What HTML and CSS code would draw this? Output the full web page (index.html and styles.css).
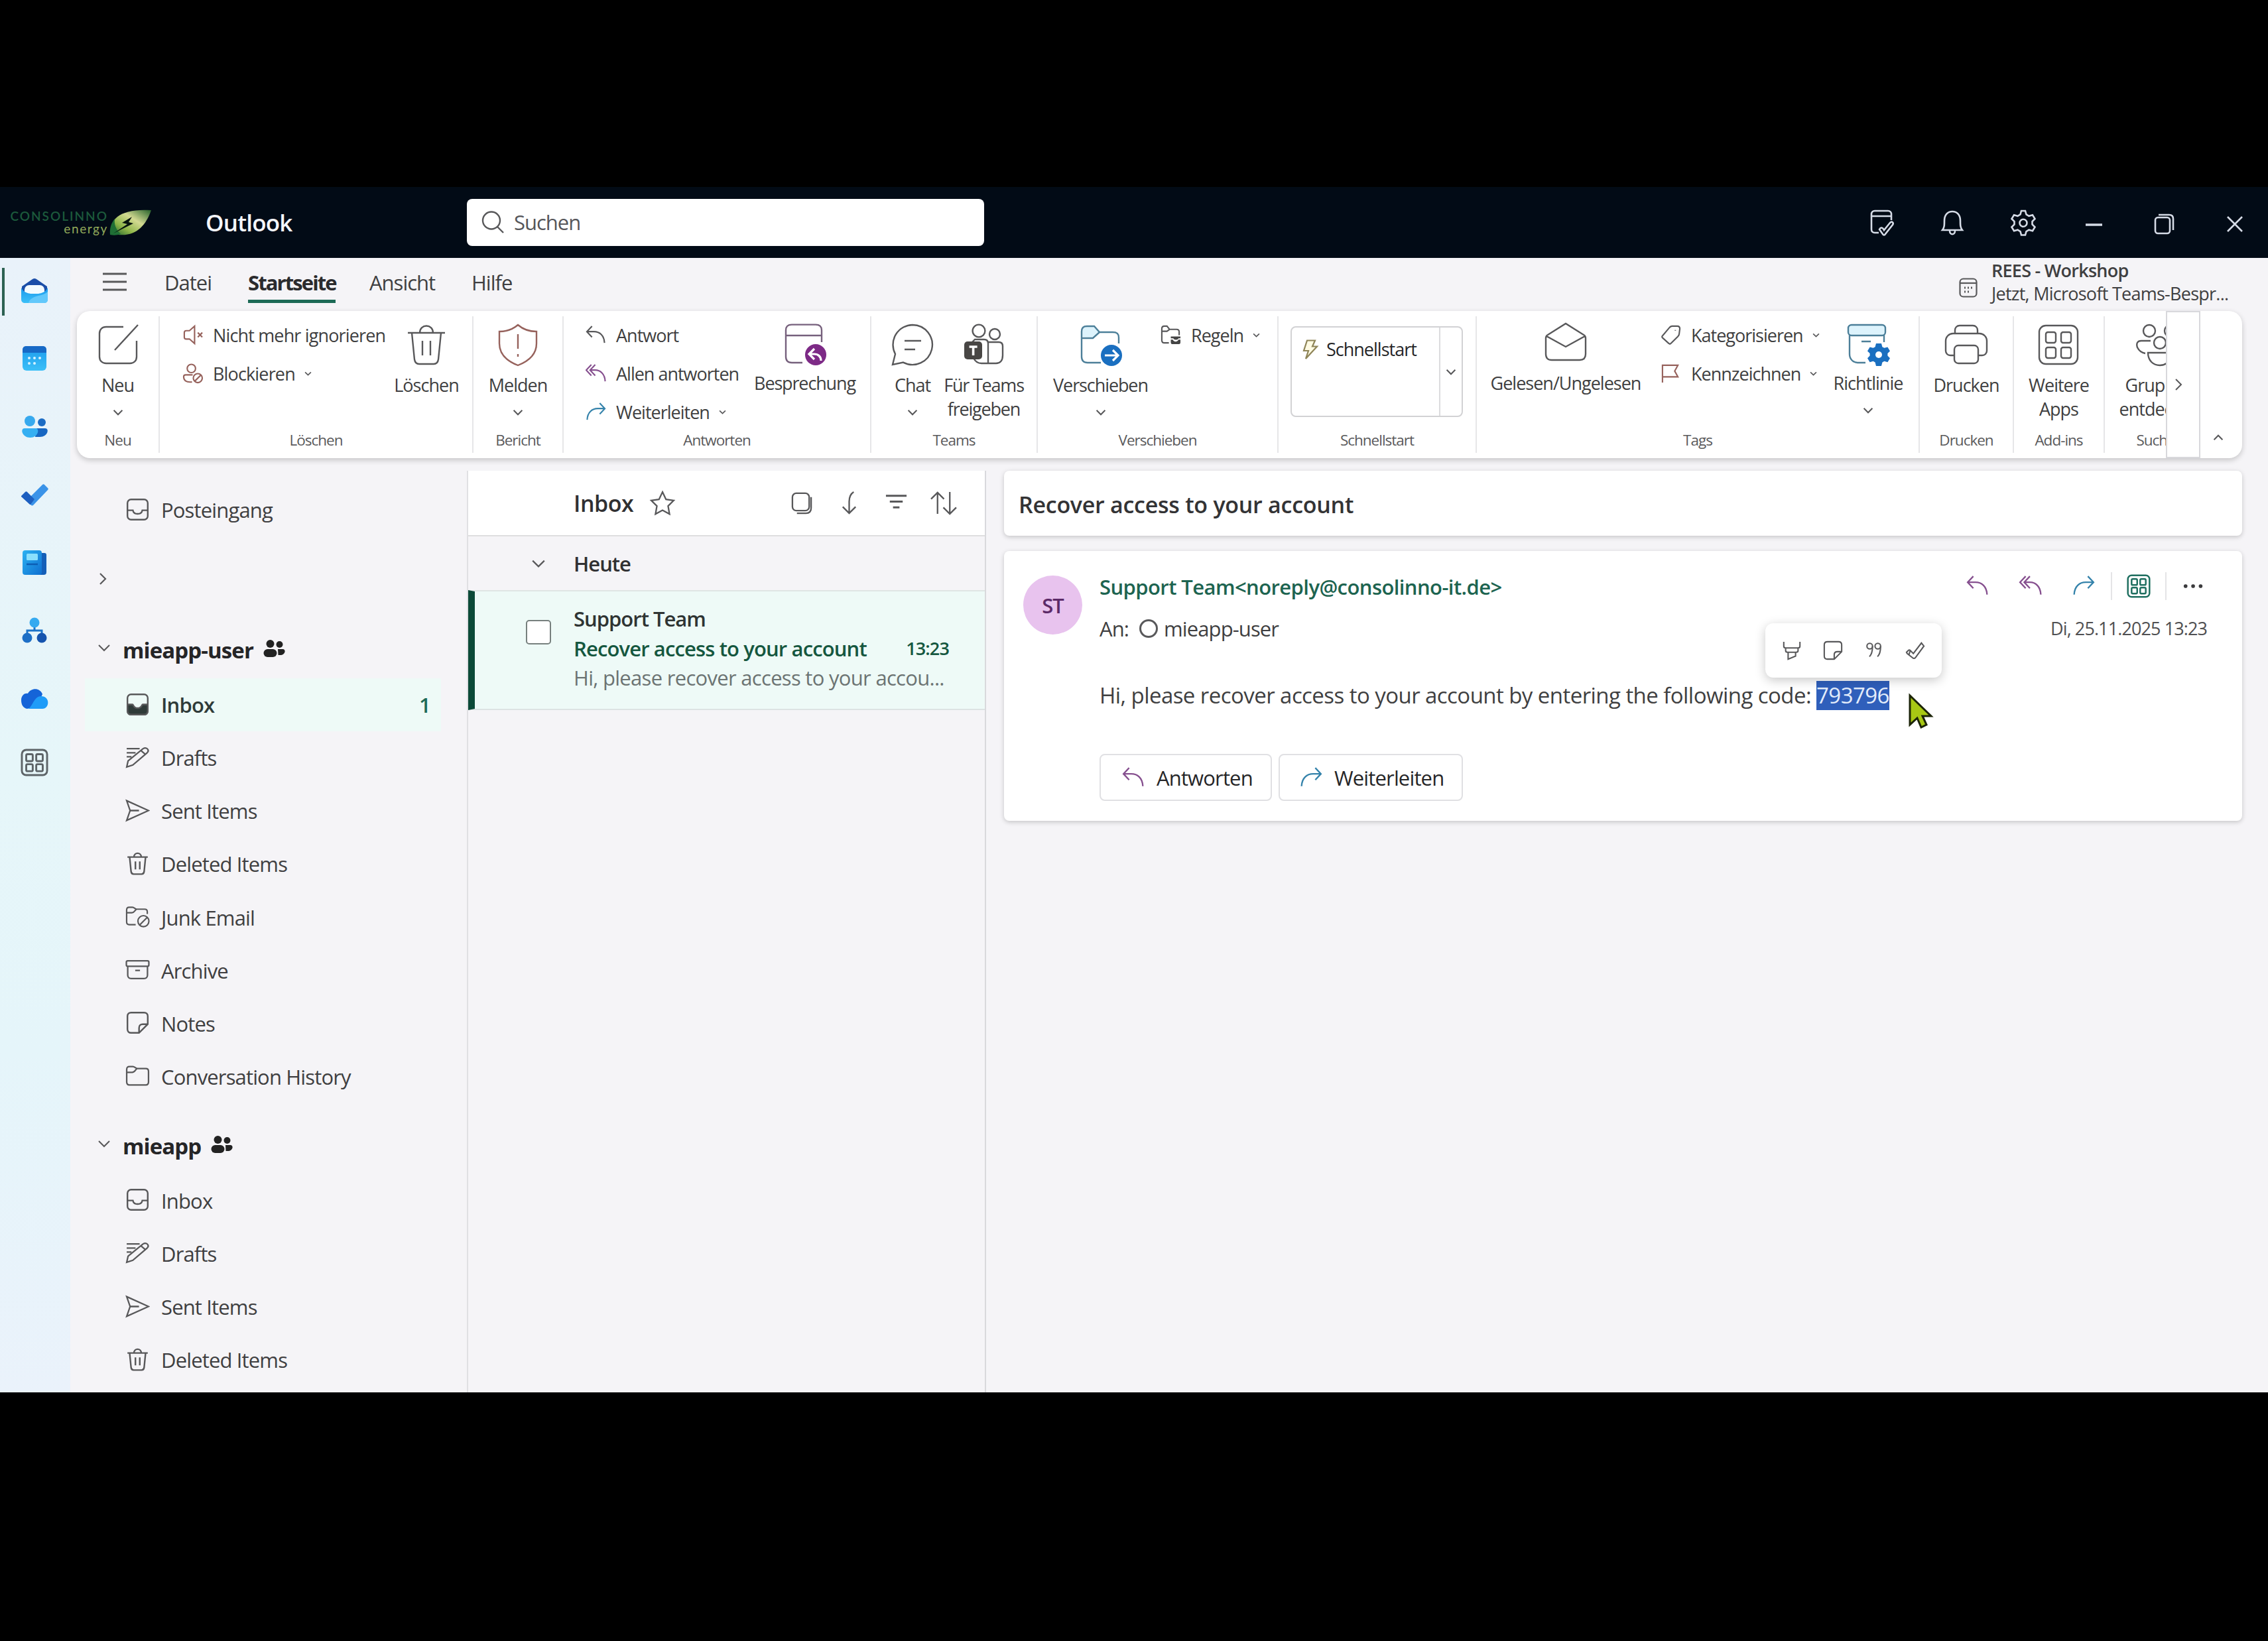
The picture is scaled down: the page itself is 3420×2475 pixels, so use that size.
FILE: index.html
```html
<!DOCTYPE html>
<html lang="de">
<head>
  <meta charset="UTF-8">
  <meta name="viewport" content="width=device-width, initial-scale=1.0">
  <title>Outlook</title>
  <link rel="stylesheet" href="styles.css">
</head>
<body>

<!-- Icons -->
<svg class="defs" width="0" height="0">
  <defs>
    <linearGradient id="gBlue" x1="0" y1="0" x2="1" y2="1"><stop offset="0" stop-color="#2cb2f2"/><stop offset="1" stop-color="#0f6fd0"/></linearGradient>
    <linearGradient id="gSky" x1="0" y1="0" x2="0" y2="1"><stop offset="0" stop-color="#1c9aec"/><stop offset="1" stop-color="#3cc0f8"/></linearGradient>
    <linearGradient id="gLeaf" x1="0" y1="1" x2="1" y2="0"><stop offset="0" stop-color="#155c2c"/><stop offset=".3" stop-color="#8db548"/><stop offset=".6" stop-color="#d3da92"/><stop offset="1" stop-color="#24602a"/></linearGradient>
  </defs>
  <symbol id="down" viewBox="0 0 20 20"><path d="M2 6l8 8 8-8"/></symbol>
  <symbol id="right" viewBox="0 0 20 20"><path d="M6 2l8 8-8 8"/></symbol>
  <symbol id="up" viewBox="0 0 20 20"><path d="M2 14l8-8 8 8"/></symbol>
  <symbol id="reply" viewBox="0 0 32 32"><path d="M10 2L2 10.500l8 8.500M2 10.500h11c9 0 16 6 16.500 17.500"/></symbol>
  <symbol id="replyall" viewBox="0 0 32 32"><path d="M9 2L1 10.500l8 8.500M15 2L7 10.500l8 8.500M7 10.500h8c8 0 15 6 15.500 17.500"/></symbol>
  <symbol id="forward" viewBox="0 0 32 32"><path d="M22 2l8 8.500L22 19M30 10.500H19C10 10.500 3 16.500 2.500 28"/></symbol>
  <symbol id="trash" viewBox="0 0 32 32"><path d="M2 7h28M11 7c0-7 10-7 10 0M5 7l2 20c.3 2 1.500 3.500 3.500 3.500h11c2 0 3.200-1.500 3.500-3.500l2-20M13 13v11M19 13v11"/></symbol>
  <symbol id="inbox" viewBox="0 0 32 32"><rect x="2" y="2" width="28" height="28" rx="5"/><path d="M2 17h7.500c.5 3 3 5 6.500 5s6-2 6.500-5H30"/></symbol>
  <symbol id="inboxfill" viewBox="0 0 32 32"><rect x="2" y="2" width="28" height="28" rx="5"/><path fill="#2f3b39" d="M2 16h7c1.500 0 1 5 7 5s5.500-5 7-5h7v9c0 3-2 5-5 5H7c-3 0-5-2-5-5z"/></symbol>
  <symbol id="drafts" viewBox="0 0 36 32"><path d="M2 3h19M2 9h13M2 15h7M2 30l2-9L26 3c5-3 10 2 6 6L11 27zM23 6l6 5"/></symbol>
  <symbol id="sent" viewBox="0 0 36 32"><path d="M2 1.500L34 16 2 30.500 7 16zM7 16h13"/></symbol>
  <symbol id="folder" viewBox="0 0 36 32"><path d="M2 25V7c0-3 1-4.500 4-4.500h5c3 0 4 3 7 3h12c3 0 4 1.500 4 4V25c0 3-1.500 4.500-4 4.500H6c-2.500 0-4-1.500-4-4.500zM2 11h8c4 0 4-3 7-5.500"/></symbol>
  <symbol id="junk" viewBox="0 0 38 34"><path d="M16 29.500H6c-2.500 0-4-1.500-4-4.500V7c0-3 1-4.500 4-4.500h5c3 0 4 3 7 3h12c3 0 4 1.500 4 4V13M2 11h8c4 0 4-3 7-5.500"/><circle cx="28" cy="24" r="8.500"/><path d="M22 30l12-12"/></symbol>
  <symbol id="archive" viewBox="0 0 36 32"><rect x="1.500" y="3" width="33" height="8" rx="2"/><path d="M3.500 11v13c0 3 2 5 5 5h19c3 0 5-2 5-5V11M14.500 17h7"/></symbol>
  <symbol id="note" viewBox="0 0 32 32"><path d="M2 7c0-3 2-5 5-5h18c3 0 5 2 5 5v11L18 30H7c-3 0-5-2-5-5zM30 18h-7c-3 0-5 2-5 5v7"/></symbol>
  <symbol id="people" viewBox="0 0 34 28"><g stroke="none" fill="#222"><circle cx="11" cy="7" r="6"/><circle cx="25" cy="8" r="5"/><rect x="1" y="15" width="20" height="12" rx="6"/><path d="M22.500 15H30c5 0 4 9-4 9h-3z"/></g></symbol>
  <symbol id="apps" viewBox="0 0 32 32"><rect x="1.500" y="1.500" width="29" height="29" rx="5"/><rect x="6.500" y="6.500" width="7.500" height="8" rx="1.500"/><rect x="18" y="6.500" width="7.500" height="8" rx="1.500"/><rect x="6.500" y="18" width="7.500" height="8" rx="1.500"/><rect x="18" y="18" width="7.500" height="8" rx="1.500"/></symbol>
</svg>

<div class="window">

  <!-- Titelleiste -->
  <header class="titlebar">
    <div class="logo">
      <div class="logo-text"><span class="logo-name">CONSOLINNO</span><span class="logo-sub">energy</span></div>
      <svg class="leaf" viewBox="0 0 64 40"><path fill="url(#gLeaf)" d="M3 36C-1 14 18-2 63 1 54 27 36 45 3 36z"/><path fill="#1f6f35" d="M1 38C0 28 3 20 8 14c-1 8 1 15 9 23-6 2-11 2-16 1z"/><path fill="#06140e" d="M34 11L19 20l8 2L6 36l30-15-7-2z"/></svg>
    </div>
    <div class="app-name">Outlook</div>
    <div class="search">
      <svg class="search-icon" viewBox="0 0 34 34"><circle cx="15" cy="14.500" r="13"/><path d="M24 24l9 9"/></svg>
      <span>Suchen</span>
    </div>
    <div class="window-buttons">
      <svg viewBox="0 0 40 40"><path d="M15 35H9c-3 0-5-2-5-5V7c0-3 2-5 5-5h20c3 0 5 2 5 5v9M4 10h30M16 30c2-4 5-3 7 1l9-11c3-3 6 0 4 3L25 37c-1 2-3 2-4 0z"/></svg>
      <svg viewBox="0 0 40 40"><path d="M5 31c3-4 3-7 3-14C8 8 13 3 20 3s12 5 12 14c0 7 0 10 3 14zM16 32c0 7 8 7 8 0"/></svg>
      <svg viewBox="0 0 40 40"><path d="M17 2h6l1.500 5.500 4 2.300 5.500-1.500 3.500 5.700-4 4v4.500l4 4-3.500 5.700-5.500-1.500-4 2.300L23 38.500h-6l-1.500-5.500-4-2.300L6 32.200 2.500 26.500l4-4V18l-4-4L6 8.300l5.500 1.500 4-2.300z"/><circle cx="20" cy="20.300" r="5.500"/></svg>
      <svg viewBox="0 0 40 40"><path d="M8 23h25" stroke-width="3.500"/></svg>
      <svg viewBox="0 0 40 40"><rect x="6" y="12" width="22" height="24" rx="4"/><path d="M11 8h16c4 0 6 2 6 6v17"/></svg>
      <svg viewBox="0 0 40 40"><path d="M9 11l22 22M31 11L9 33"/></svg>
    </div>
  </header>

  <div class="main">

    <!-- App-Leiste -->
    <nav class="rail">
      <a class="active"><svg viewBox="0 0 42 42"><path fill="#1b4ea8" d="M2 14L18 3c2-1.500 4-1.500 6 0l16 11v8H2z"/><rect fill="#f3fbff" x="6" y="12" width="30" height="18" rx="7"/><path fill="url(#gSky)" d="M1 16c4 7 9 8 14 9h12c5-1 10-2 14-9v17c0 4-2 6-6 6H7c-4 0-6-2-6-6z"/><path fill="#62c8fb" d="M12 39c2-7 8-9 15-11 6-1 11-3 14-6v11c0 4-2 6-6 6z"/></svg></a>
      <a><svg viewBox="0 0 42 42"><rect x="3" y="2" width="36" height="37" rx="6" fill="url(#gSky)"/><path fill="#1769c6" d="M3 12V8c0-4 2-6 6-6h24c4 0 6 2 6 6v4z"/><g fill="#d7f3ff"><circle cx="13" cy="20" r="2"/><circle cx="21" cy="20" r="2"/><circle cx="29" cy="20" r="2"/><circle cx="13" cy="28" r="2"/><circle cx="21" cy="28" r="2"/></g></svg></a>
      <a><svg viewBox="0 0 42 42"><circle cx="14" cy="12" r="8" fill="#37a9ee"/><circle cx="32" cy="14" r="6" fill="#1c6cc4"/><path fill="#1767c2" d="M24 23h13c7 0 4 13-8 13h-7z"/><path fill="#35aff2" d="M6 23h17c6 0 4 14-8.500 14S-1 23 6 23z"/></svg></a>
      <a><svg viewBox="0 0 42 42"><path fill="#3a93e8" d="M11 28L33 6c1-1 2-1 3 0l5 5c1 1 1 2 0 3L20 36c-2 2-3 2-5 0z"/><path fill="#1c5fc0" d="M1 23l6-6c1-1 2-1 3 0l11 11-6 8c-1 0-1 0-2-1L1 24z"/></svg></a>
      <a><svg viewBox="0 0 42 42"><path fill="#145fb8" d="M28 6h8c2 0 3 1 3 3v26c0 3-2 4-4 4h-9z"/><rect x="3" y="2" width="29" height="37" rx="4" fill="url(#gBlue)"/><rect x="9" y="7" width="17" height="10" rx="1.500" fill="#8be0fd"/><path d="M9 23h17" stroke="#0c5eb4" stroke-width="2.500"/></svg></a>
      <a><svg viewBox="0 0 42 42"><path d="M21 12v9M10 30v-9h22v9" fill="none" stroke="#1c74c9" stroke-width="3"/><circle cx="21" cy="9" r="7.500" fill="#35aaf0"/><circle cx="10" cy="32" r="7.500" fill="#1d6fc6"/><circle cx="32" cy="32" r="7.500" fill="#1554ae"/></svg></a>
      <a><svg viewBox="0 0 42 42"><path fill="#1564d8" d="M1 23C1 15 7 12 11 13c5-9 18-9 22 1l-8 18-15 4C4 35 1 30 1 23z"/><path fill="#1f9cf8" d="M10 36c8 0 9-19 21-19 14 0 13 19 2 19z"/></svg></a>
      <a class="more"><svg class="line" viewBox="0 0 32 32"><use href="#apps"/></svg></a>
    </nav>

    <div class="content">

      <!-- Menü -->
      <div class="tabs">
        <svg class="burger" viewBox="0 0 36 28"><path d="M0 2h36M0 14h36M0 26h36"/></svg>
        <a class="tab tab-file">Datei</a>
        <a class="tab tab-home">Startseite</a>
        <a class="tab tab-view">Ansicht</a>
        <a class="tab">Hilfe</a>
        <div class="meeting">
          <svg viewBox="0 0 28 30"><rect x="1.500" y="1.500" width="25" height="27" rx="5"/><path d="M1.500 8h25"/><path d="M8 15h2M13 15h2M18 15h2M8 21h2M13 21h2" stroke-width="3"/></svg>
          <div><b>REES - Workshop</b><span>Jetzt, Microsoft Teams-Bespr...</span></div>
        </div>
      </div>

      <!-- Menüband -->
      <div class="ribbon">
        <div class="group g-new">
          <div class="group-body center">
            <a class="big"><svg viewBox="0 0 32 32"><path d="M20 2.500H7c-3 0-5 2-5 5V25c0 3 2 5 5 5h18c3 0 5-2 5-5V13M13.500 20L31 1"/></svg><span>Neu</span><svg class="chev"><use href="#down"/></svg></a>
          </div>
          <div class="group-label">Neu</div>
        </div>

        <div class="group g-delete">
          <div class="group-body">
            <div class="small-col">
              <a class="small"><svg class="red" viewBox="0 0 32 32"><path d="M19 2v27l-8-7H6c-2 0-3-1-3-3v-7c0-2 1-3 3-3h5zM24 12l7 7M31 12l-7 7"/></svg>Nicht mehr ignorieren</a>
              <a class="small"><svg class="red" viewBox="0 0 32 32"><circle cx="14" cy="8" r="6.500"/><path d="M15 29C5 30 2 26 2 21c0-2 1-3 3-3h11"/><circle cx="24" cy="23" r="7"/><path d="M19 28l10-10"/></svg>Blockieren<svg class="chev"><use href="#down"/></svg></a>
            </div>
            <a class="big"><svg viewBox="0 0 32 32"><use href="#trash"/></svg><span>Löschen</span></a>
          </div>
          <div class="group-label">Löschen</div>
        </div>

        <div class="group g-report">
          <div class="group-body center">
            <a class="big"><svg class="red" viewBox="0 0 32 32"><path d="M16 1c4 3.500 8 5 14 5v9c0 8-5 13-14 16.500C7 28 2 23 2 15V6c6 0 10-1.500 14-5zM16 8v11M16 23v2"/></svg><span>Melden</span><svg class="chev"><use href="#down"/></svg></a>
          </div>
          <div class="group-label">Bericht</div>
        </div>

        <div class="group g-reply">
          <div class="group-body">
            <div class="small-col">
              <a class="small"><svg viewBox="0 0 32 32"><use href="#reply"/></svg>Antwort</a>
              <a class="small"><svg class="purple" viewBox="0 0 32 32"><use href="#replyall"/></svg>Allen antworten</a>
              <a class="small"><svg class="blue" viewBox="0 0 32 32"><use href="#forward"/></svg>Weiterleiten<svg class="chev"><use href="#down"/></svg></a>
            </div>
            <a class="big tight"><svg viewBox="0 0 32 32"><path d="M14 29.500H6c-3 0-4.500-1.500-4.500-4.500V5C1.500 2 3 .800 6 .800h18c3 0 4.500 1.200 4.500 4.200v9M1.500 9h27" stroke="#76607c"/><circle cx="24" cy="23.500" r="8" fill="#7d2a86" stroke="none"/><path d="M23 19l-4 4 4 4M19 23h4c3 0 5 2 5 5" stroke="#fff" stroke-width="1.600"/></svg><span>Besprechung</span></a>
          </div>
          <div class="group-label">Antworten</div>
        </div>

        <div class="group g-teams">
          <div class="group-body">
            <a class="big"><svg viewBox="0 0 32 32"><path d="M16 1a15 15 0 1 1-7 28.300L1 31l2-8A15 15 0 0 1 16 1zM10 13h12.500M10 19.500h8"/></svg><span>Chat</span><svg class="chev"><use href="#down"/></svg></a>
            <a class="big wide"><svg viewBox="0 0 32 32"><circle cx="12" cy="5.500" r="4.700"/><circle cx="24" cy="8" r="4"/><path d="M7 14l2-2h7c2 0 3 1 3 3v15h-5c-3 0-5-2-6-4M19 14h8c2 0 3 1 3 3v7c0 4-2 6-5 6h-6"/><rect x="1" y="13.500" width="13.500" height="13.500" rx="2.500" fill="#484644" stroke="none"/><path d="M4.800 17.500h6M7.800 17.500v6.500" stroke="#fff" stroke-width="1.800"/></svg><span>Für Teams<br>freigeben</span></a>
          </div>
          <div class="group-label">Teams</div>
        </div>

        <div class="group g-move">
          <div class="group-body">
            <a class="big"><svg viewBox="0 0 32 32"><path d="M1.500 10V6c0-3 1.500-4 4-4H11l4 4-4 4.500z" fill="#ddf3fc" stroke="none"/><path d="M16 29.500H6c-3 0-4.500-1.500-4.500-4.500V6c0-3 1.500-4 4-4H11l4 4.500h10c3 0 4.500 1 4.500 4V15M1.500 11H10l5-4.500" stroke="#4c7f99"/><circle cx="24" cy="24" r="8" fill="#1a6fc0" stroke="none"/><path d="M19 24h10M25 20l4 4-4 4" stroke="#fff" stroke-width="1.600"/></svg><span>Verschieben</span><svg class="chev"><use href="#down"/></svg></a>
            <div class="small-col">
              <a class="small"><svg viewBox="0 0 32 32"><path d="M13 28H6c-2 0-4-1-4-4V6c0-3 1-4 4-4h4l4 5h11c3 0 4 1 4 4v5M2 10h8l4-3"/><path d="M16 18h15v3h-3c-1 3-7 3-8 0h-4zM16 23h3c2 4 7 4 9 0h3v4c0 2-1 3-3 3h-9c-2 0-3-1-3-3z" fill="#444" stroke="none"/></svg>Regeln<svg class="chev"><use href="#down"/></svg></a>
            </div>
          </div>
          <div class="group-label">Verschieben</div>
        </div>

        <div class="group g-quick">
          <div class="group-body">
            <div class="quick-box">
              <div class="quick-item"><svg viewBox="0 0 24 30"><path d="M7 1.500h12l-4 9h7L5 29l4-12H2z"/></svg>Schnellstart</div>
              <div class="quick-more"><svg class="chev"><use href="#down"/></svg></div>
            </div>
          </div>
          <div class="group-label">Schnellstart</div>
        </div>

        <div class="group g-tags">
          <div class="group-body">
            <a class="big tight"><svg viewBox="0 0 32 32"><path d="M1 11c0-1 .5-2 1.500-2.500L16 0l13.500 8.500c1 .5 1.500 1.500 1.500 2.500v12c0 3-1.500 4.500-4.500 4.500h-21C2.500 27.500 1 26 1 23zM1.500 9.500L16 17.500l14.500-8"/></svg><span>Gelesen/Ungelesen</span></a>
            <div class="small-col">
              <a class="small"><svg viewBox="0 0 32 32"><path d="M18 2h8c3 0 4 1 4 4l-1 8c0 2-1 3-2 4L16 29c-1 1-2 1-3 0L3 20c-1-1-1-2 0-3L14 4c1-1 2-2 4-2zM23 8v1"/></svg>Kategorisieren<svg class="chev"><use href="#down"/></svg></a>
              <a class="small"><svg class="red" viewBox="0 0 32 32"><path d="M3 30V3h24l-5 9 5 9H3"/></svg>Kennzeichnen<svg class="chev"><use href="#down"/></svg></a>
            </div>
            <a class="big tight"><svg viewBox="0 0 32 32"><rect x="1" y="1" width="28" height="8" rx="2.500" fill="#ddf3fc" stroke="#4c7f99"/><path d="M14 29.500H8C5 29.500 2 27 2 23V9M28 9v5M11 13.500h7" stroke="#4c7f99"/><path fill="#1a6fc0" stroke="none" d="M22 15h4l.7 2.600 1.500.8 2.500-.7 1.800 3-1.800 1.800v1.800l1.800 1.800-1.800 3-2.500-.7-1.500.8L26 32h-4l-.7-2.800-1.500-.8-2.500.7-1.800-3 1.800-1.800v-1.800l-1.800-1.800 1.800-3 2.500.7 1.500-.8z"/><circle cx="24" cy="23.500" r="2.500" fill="#fff" stroke="none"/></svg><span>Richtlinie</span><svg class="chev"><use href="#down"/></svg></a>
          </div>
          <div class="group-label">Tags</div>
        </div>

        <div class="group g-print">
          <div class="group-body center">
            <a class="big"><svg viewBox="0 0 32 32"><path d="M7.500 7.500V5c0-2 1.500-3.500 3.500-3.500h10c2 0 3.500 1.500 3.500 3.500v2.500M7 24H4c-2 0-3.500-1.500-3.500-3.500V13c0-3 2.500-5.500 5.500-5.500h20c3 0 5.500 2.500 5.500 5.500v7.500c0 2-1.500 3.500-3.500 3.500h-3"/><rect x="7" y="16.500" width="18" height="13.500" rx="3"/></svg><span>Drucken</span></a>
          </div>
          <div class="group-label">Drucken</div>
        </div>

        <div class="group g-addins">
          <div class="group-body center">
            <a class="big"><svg viewBox="0 0 32 32"><use href="#apps"/></svg><span>Weitere<br>Apps</span></a>
          </div>
          <div class="group-label">Add-ins</div>
        </div>

        <div class="group g-find">
          <div class="find-inner">
            <div class="group-body center">
              <a class="big"><svg viewBox="0 0 32 32"><circle cx="8" cy="5.500" r="4.500"/><circle cx="24" cy="5.500" r="4.500"/><circle cx="16" cy="14.500" r="4.500"/><path d="M9 13H2c-3 0-4 2-3 5 1 2 3 4 6 4.500M23 13h7c3 0 4 2 3 5-1 2-3 4-6 4.500M8 22h16c0 6-3 9.500-8 9.500S7 28 7 22z"/></svg><span>Gruppen<br>entdecken</span></a>
            </div>
            <div class="group-label">Suchen</div>
          </div>
        </div>
        <div class="ribbon-next"><svg class="chev"><use href="#right"/></svg></div>
        <div class="ribbon-collapse"><svg class="chev"><use href="#up"/></svg></div>
      </div>

      <div class="panes">

        <!-- Ordner -->
        <aside class="folders">
          <a class="folder"><svg><use href="#inbox"/></svg>Posteingang</a>
          <div class="collapsed"><svg class="chev"><use href="#right"/></svg></div>
          <div class="account"><svg class="chev"><use href="#down"/></svg>mieapp-user<svg class="people"><use href="#people"/></svg></div>
          <a class="folder selected"><svg><use href="#inboxfill"/></svg>Inbox<span class="count">1</span></a>
          <a class="folder"><svg><use href="#drafts"/></svg>Drafts</a>
          <a class="folder"><svg><use href="#sent"/></svg>Sent Items</a>
          <a class="folder"><svg><use href="#trash"/></svg>Deleted Items</a>
          <a class="folder"><svg><use href="#junk"/></svg>Junk Email</a>
          <a class="folder"><svg><use href="#archive"/></svg>Archive</a>
          <a class="folder"><svg><use href="#note"/></svg>Notes</a>
          <a class="folder"><svg><use href="#folder"/></svg>Conversation History</a>
          <div class="account second"><svg class="chev"><use href="#down"/></svg>mieapp<svg class="people"><use href="#people"/></svg></div>
          <a class="folder"><svg><use href="#inbox"/></svg>Inbox</a>
          <a class="folder"><svg><use href="#drafts"/></svg>Drafts</a>
          <a class="folder"><svg><use href="#sent"/></svg>Sent Items</a>
          <a class="folder"><svg><use href="#trash"/></svg>Deleted Items</a>
        </aside>

        <!-- Nachrichtenliste -->
        <section class="list">
          <div class="list-head">
            <b>Inbox</b>
            <svg class="star" viewBox="0 0 36 36"><path d="M18 2l5 10.500 11 1.500-8 8 2 11.500-10-5.500-10 5.500L10 22l-8-8 11-1.500z"/></svg>
            <div class="list-tools">
              <svg viewBox="0 0 36 36"><rect x="3" y="3" width="26" height="27" rx="6"/><path d="M32 9v17c0 5-3 8-8 8H10"/></svg>
              <svg viewBox="0 0 36 36"><path d="M25 1c-5 3-7 8-7 15v18M8 24l10 10 10-10"/></svg>
              <svg viewBox="0 0 36 36"><path d="M2 7h32M8 16h20M13 25h10" stroke-width="3.200"/></svg>
              <svg viewBox="0 0 36 36"><path d="M9 35V2M-1 12L9 2l10 10M28 1v34M18 25l10 10 10-10"/></svg>
            </div>
          </div>
          <div class="list-group"><svg class="chev"><use href="#down"/></svg>Heute</div>
          <div class="mail">
            <div class="checkbox"></div>
            <div class="mail-text">
              <div class="mail-from">Support Team</div>
              <div class="mail-subject"><span>Recover access to your account</span><time>13:23</time></div>
              <div class="mail-preview">Hi, please recover access to your accou...</div>
            </div>
          </div>
        </section>

        <!-- Lesebereich -->
        <section class="reader">
          <div class="subject-card">Recover access to your account</div>
          <article class="message">
            <div class="avatar">ST</div>
            <div class="message-main">
              <div class="message-top">
                <div class="sender">Support Team&lt;noreply@consolinno-it.de&gt;</div>
                <div class="actions">
                  <svg class="purple"><use href="#reply"/></svg>
                  <svg class="purple"><use href="#replyall"/></svg>
                  <svg class="blue"><use href="#forward"/></svg>
                  <span class="apps-btn"><svg><use href="#apps"/></svg></span>
                  <svg class="dots" viewBox="0 0 36 36"><circle cx="5" cy="18" r="3"/><circle cx="17" cy="18" r="3"/><circle cx="29" cy="18" r="3"/></svg>
                </div>
              </div>
              <div class="message-to">
                <span>An:</span><i class="presence"></i><span>mieapp-user</span>
                <time>Di, 25.11.2025 13:23</time>
              </div>
              <p class="body-text">Hi, please recover access to your account by entering the following code: <mark>793796</mark></p>
              <div class="buttons">
                <button class="btn-reply"><svg class="purple"><use href="#reply"/></svg>Antworten</button>
                <button class="btn-forward"><svg class="blue"><use href="#forward"/></svg>Weiterleiten</button>
              </div>
            </div>
            <!-- schwebende Leiste über der Markierung -->
            <div class="float-bar">
              <svg viewBox="0 0 32 32"><path d="M3 2v7c0 2 1 3 3 3h20c2 0 3-1 3-3V2M6 12v4c0 2 1 3 3 3h14c2 0 3-1 3-3v-4M10 19v11l12-5v-6"/></svg>
              <svg viewBox="0 0 32 32"><use href="#note"/></svg>
              <svg viewBox="0 0 32 32"><circle cx="9" cy="9" r="4.500"/><path d="M13.500 9c0 7-1 13-5 17"/><circle cx="22" cy="9" r="4.500"/><path d="M26.500 9c0 7-1 13-5 17"/></svg>
              <svg viewBox="0 0 32 32"><path d="M2 19l3-3c1-1 2-1 3 0l5 5L26 4l4 5-14 19c-1 1-3 1-4 0l-9-7z M8 16l-2 7"/></svg>
            </div>
            <svg class="cursor" viewBox="0 0 36 52"><path d="M2 2v44l11-10 6 14 8-4-6-13h13z" fill="#a8c814" stroke="#1c2408" stroke-width="3"/></svg>
          </article>
        </section>

      </div>
    </div>
  </div>
</div>

</body>
</html>
```
FILE: styles.css
```css
* {
    box-sizing: border-box;
}

body {
    margin: 0;
    width: 3420px;
    height: 2475px;
    padding-top: 282px;
    overflow: hidden;
    background: #000;
    color: #3f3f41;
    font-family: "Open Sans", "Noto Sans", sans-serif;
    font-size: 31px;
    letter-spacing: -1px;
}

.defs {
    position: absolute;
}

svg {
    display: block;
    flex: none;
    fill: none;
    stroke: #58585a;
    stroke-width: 2.2;
    overflow: visible;
}

svg.red { stroke: #96625c; }
svg.purple { stroke: #86508f; }
svg.blue { stroke: #3583ab; }

.chev {
    width: 16px;
    height: 16px;
    stroke-width: 2.6;
}

.window {
    height: 1818px;
    background: #f5f4f7;
}

/* Titelleiste */
.titlebar {
    display: flex;
    align-items: center;
    height: 107px;
    background: #020b16;
}

.logo {
    display: flex;
    align-items: center;
    width: 310px;
    padding-left: 15px;
    gap: 2px;
}

.logo-text {
    display: flex;
    flex-direction: column;
    align-items: flex-end;
    width: 148px;
    margin-bottom: 2px;
    font-family: Lato, sans-serif;
    font-size: 19px;
    line-height: 19px;
}

.logo-name {
    color: #1c5a3c;
    font-weight: 600;
    letter-spacing: 2px;
}

.logo-sub {
    color: #91a95a;
    letter-spacing: 1.600px;
}

.leaf {
    width: 64px;
    height: 40px;
    stroke: none;
}

.app-name {
    width: 394px;
    color: #f4f6fa;
    font-size: 35px;
    font-weight: 600;
    letter-spacing: -0.800px;
}

.search {
    display: flex;
    align-items: center;
    width: 780px;
    height: 71px;
    margin-bottom: 1px;
    padding-left: 22px;
    gap: 15px;
    border-radius: 8px;
    background: #fff;
    color: #56565a;
}

.search-icon {
    width: 34px;
    height: 34px;
    stroke-width: 2.4;
}

.window-buttons {
    display: flex;
    margin-left: auto;
    padding-right: 30px;
    gap: 66.400px;
}

.window-buttons svg {
    width: 40px;
    height: 40px;
    stroke: #d5dbe6;
    stroke-width: 2.6;
}

.main {
    display: flex;
    height: 1711px;
}

/* App-Leiste */
.rail {
    width: 106px;
    padding-top: 15px;
    background: linear-gradient(180deg, #e9f2fa 0%, #e6f6f9 45%, #e5f5fa 70%, #eaf2fb 100%);
}

.rail a {
    display: flex;
    align-items: center;
    justify-content: center;
    height: 72px;
    margin-bottom: 30.500px;
    padding: 0 2px 3px 0;
}

.rail a.active {
    box-shadow: inset 3px 0 #e9f2fa, inset 7px 0 #2c6152;
}

.rail a.more {
    margin-top: -37px;
    padding-top: 62px;
}

.rail svg {
    width: 42px;
    height: 42px;
    stroke: none;
}

.rail svg.line {
    stroke: #5d6468;
    stroke-width: 2.2;
}

.content {
    display: flex;
    flex-direction: column;
    width: 3314px;
}

/* Menü */
.tabs {
    display: flex;
    height: 80px;
    padding-left: 49px;
}

.burger {
    width: 36px;
    height: 28px;
    margin: 22px 57px 0 0;
    stroke-width: 2.8;
}

.tab {
    height: 68px;
    padding-top: 15px;
    margin-right: 53px;
    line-height: 44px;
}

.tab-file { width: 73px; }

.tab-home {
    width: 132px;
    border-bottom: 5px solid #1d6a56;
    color: #2b2b2d;
    font-weight: 700;
    margin-right: 51px;
    letter-spacing: -1.900px;
}

.tab-view { width: 101px; }

.meeting {
    display: flex;
    align-items: flex-end;
    width: 413px;
    height: 68px;
    margin-left: auto;
    margin-right: 53px;
    gap: 21px;
    font-size: 27px;
    line-height: 35px;
    letter-spacing: -0.740px;
    white-space: nowrap;
}

.meeting svg {
    width: 28px;
    height: 30px;
    margin-bottom: 8px;
}

.meeting div {
    height: 67px;
}

.meeting b,
.meeting span {
    display: block;
    font-weight: 600;
}

.meeting span {
    font-weight: 400;
}

/* Menüband */
.ribbon {
    display: flex;
    width: 3265px;
    height: 222px;
    margin-left: 10px;
    border-radius: 20px;
    background: #fff;
    box-shadow: 0 3px 8px rgba(0, 0, 0, 0.2);
    font-size: 27px;
}

.group {
    display: flex;
    flex-direction: column;
    flex: none;
    height: 206px;
    margin: 8px 0;
    border-right: 2px solid #e6e6e8;
}

.g-new { width: 125px; }
.g-delete { width: 473px; }
.g-report { width: 136px; }
.g-reply { width: 464px; }
.g-teams { width: 251px; }
.g-move { width: 363px; }
.g-quick { width: 299px; }
.g-tags { width: 668px; }
.g-print { width: 142px; }
.g-addins { width: 137px; }

.g-find {
    width: 92px;
    overflow: hidden;
    border: 0;
}

.find-inner {
    width: 166px;
}

.group-body {
    display: flex;
    height: 172px;
}

.group-body.center {
    justify-content: center;
}

.group-label {
    color: #5a5a5c;
    font-size: 22.500px;
    line-height: 30px;
    text-align: center;
}

.big {
    display: flex;
    flex-direction: column;
    align-items: center;
    padding-top: 11px;
    line-height: 36px;
    text-align: center;
    white-space: nowrap;
}

.big > svg:first-child {
    width: 64px;
    height: 64px;
    margin-bottom: 11px;
    stroke-width: 1.2;
}

.big.tight > svg:first-child {
    margin-bottom: 8px;
}

.big .chev {
    margin-top: 15px;
}

.small {
    display: flex;
    align-items: center;
    height: 58px;
    padding-bottom: 1px;
    white-space: nowrap;
}

.small > svg:first-child {
    width: 31px;
    height: 31px;
    margin-right: 15px;
}

.small .chev {
    width: 11px;
    height: 11px;
    margin-left: 14px;
    stroke-width: 3;
}

.g-delete .group-body { padding-left: 34px; }
.g-delete .small-col { width: 319px; letter-spacing: -0.850px; }
.g-delete .big { width: 98px; }

.g-reply .group-body { padding-left: 33px; }
.g-reply .small-col { width: 246px; }
.g-reply .big { width: 169px; letter-spacing: -1.150px; }

.g-teams .group-body { padding-left: 22px; }
.g-teams .big { width: 80px; }
.g-teams .big.wide { width: 135px; letter-spacing: -1.200px; }

.g-move .group-body { padding-left: 19px; }
.g-move .big { width: 151px; letter-spacing: -1.100px; }
.g-move .small-col { margin-left: 15px; }

.g-quick .group-body { padding-left: 18px; }

.g-tags .group-body { padding-left: 14px; }
.g-tags .big { width: 240px; }
.g-tags .small-col { width: 253px; margin-left: 23px; }
.g-tags .small-col + .big { width: 120px; }

.quick-box {
    display: flex;
    width: 260px;
    height: 137px;
    margin-top: 15px;
    border: 2px solid #d2d2d4;
    border-radius: 8px;
}

.quick-item {
    display: flex;
    width: 222px;
    height: 65px;
    padding-left: 16px;
    align-items: center;
    gap: 12px;
    color: #262628;
    white-space: nowrap;
}

.quick-item svg {
    width: 24px;
    height: 30px;
    fill: #fffbe3;
    stroke: #8f8558;
}

.quick-more {
    display: flex;
    flex: 1;
    align-items: center;
    justify-content: center;
    border-left: 2px solid #dcdcde;
}

.ribbon-next {
    display: flex;
    align-items: center;
    width: 52px;
    padding-left: 7px;
    border: 2px solid #d8d8dc;
}

.ribbon-next .chev {
    width: 20px;
    height: 20px;
    stroke-width: 2;
}

.ribbon-collapse {
    display: flex;
    align-items: flex-end;
    padding: 0 0 23px 19px;
}

.panes {
    display: flex;
    height: 1409px;
    padding-top: 19px;
}

/* Ordner */
.folders {
    width: 598px;
    padding: 19px 39px 0 22px;
    letter-spacing: -0.850px;
}

.folder {
    display: flex;
    align-items: center;
    height: 80.100px;
    padding-left: 61px;
}

.folder svg {
    width: 37px;
    height: 35px;
    margin: 0 17px 2px 0;
}

.folder.selected {
    background: #eefaf7;
    color: #2f3b39;
    font-weight: 600;
}

.count {
    margin-left: auto;
    padding-right: 16px;
    color: #1d6a56;
}

.collapsed {
    height: 128px;
    padding: 54px 0 0 17px;
}

.collapsed .chev {
    width: 20px;
    height: 20px;
    stroke-width: 2.2;
}

.account {
    display: flex;
    align-items: center;
    height: 86px;
    padding: 0 0 0 19px;
    color: #252527;
    font-size: 33px;
    font-weight: 700;
    letter-spacing: -0.900px;
}

.account.second {
    height: 107px;
    padding-top: 22px;
}

.account .chev {
    width: 20px;
    height: 20px;
    margin: 0 18px 6px 0;
    stroke-width: 2;
}

.people {
    width: 35px;
    height: 28px;
    margin: 0 0 5px 14px;
}

/* Nachrichtenliste */
.list {
    width: 783px;
    border-left: 2px solid #e0e0e3;
    border-right: 2px solid #d9d9dc;
}

.list-head {
    display: flex;
    align-items: center;
    height: 99px;
    padding: 0 45px 0 159px;
    border-bottom: 2px solid #dededf;
    background: #fff;
    font-size: 34px;
}

.list-head b {
    font-weight: 600;
    color: #303032;
    letter-spacing: -0.500px;
}

.star {
    width: 38px;
    height: 38px;
    margin-left: 25px;
}

.list-tools {
    display: flex;
    margin-left: auto;
    gap: 36px;
}

.list-tools svg {
    width: 35px;
    height: 35px;
    stroke-width: 2.4;
}

.list-group {
    display: flex;
    align-items: center;
    height: 81px;
    padding-left: 95px;
    color: #303032;
    font-weight: 600;
}

.list-group .chev {
    width: 22px;
    height: 22px;
    margin-right: 42px;
    stroke-width: 2;
}

.mail {
    display: flex;
    height: 181px;
    padding: 0 54px 0 77px;
    border-top: 2px solid #dfe5e4;
    border-bottom: 2px solid #dde3e3;
    border-left: 10px solid #0b4a38;
    background: #eefaf7;
}

.checkbox {
    width: 38px;
    height: 37px;
    margin: 43px 34px 0 0;
    border: 2px solid #77807e;
    border-radius: 5px;
    background: #fff;
}

.mail-text {
    flex: 1;
    padding-top: 19px;
    line-height: 44.500px;
    white-space: nowrap;
}

.mail-from {
    color: #2e3433;
    font-weight: 600;
}

.mail-subject {
    display: flex;
    justify-content: space-between;
    color: #15573f;
    font-weight: 600;
    letter-spacing: -0.870px;
}

.mail-subject time {
    font-size: 27px;
}

.mail-preview {
    color: #6c7473;
    letter-spacing: -0.700px;
}

/* Lesebereich */
.reader {
    width: 1867px;
    margin-left: 27px;
}

.subject-card,
.message {
    border-radius: 8px;
    background: #fff;
    box-shadow: 0 2px 7px rgba(0, 0, 0, 0.2);
}

.subject-card {
    height: 98px;
    padding-left: 22px;
    color: #333335;
    font-size: 34px;
    font-weight: 600;
    line-height: 103px;
    letter-spacing: -0.270px;
}

.message {
    position: relative;
    display: flex;
    height: 407px;
    margin-top: 23px;
    padding: 32px 53px 0 29px;
}

.avatar {
    width: 89px;
    height: 89px;
    margin: 5px 26px 0 0;
    border-radius: 50%;
    background: #e8c3ee;
    color: #5c2a68;
    font-weight: 600;
    line-height: 90px;
    text-align: center;
}

.message-main {
    flex: 1;
}

.message-top {
    display: flex;
    justify-content: space-between;
    height: 42px;
}

.sender {
    color: #1d6450;
    font-weight: 600;
    line-height: 44px;
    letter-spacing: -0.580px;
}

.actions {
    display: flex;
    align-items: center;
    padding-right: 2px;
    gap: 44px;
}

.actions svg {
    width: 36px;
    height: 34px;
    stroke-width: 2.2;
}

.apps-btn {
    margin: 0 -21px;
    padding: 3px 22px;
    border-left: 2px solid #e4e4e6;
    border-right: 2px solid #e4e4e6;
}

.actions .apps-btn svg {
    height: 36px;
    stroke: #1f6f60;
}

.actions .dots {
    fill: #3b3b3d;
    stroke: none;
}

.message-to {
    display: flex;
    align-items: center;
    height: 66px;
    padding-top: 19px;
    letter-spacing: -0.900px;
}

.presence {
    width: 28px;
    height: 28px;
    margin: 0 9px 0 16px;
    border: 3px solid #59595b;
    border-radius: 50%;
}

.message-to time {
    margin-left: auto;
    color: #505052;
    font-size: 27px;
}

.body-text {
    margin: 56px 0 0;
    font-size: 33px;
    line-height: 44px;
    letter-spacing: -0.560px;
    white-space: nowrap;
}

mark {
    display: inline-block;
    height: 44px;
    background: #2f5fbb;
    color: #e3ecfa;
}

.buttons {
    display: flex;
    margin-top: 66px;
    gap: 10px;
}

.buttons button {
    display: flex;
    align-items: center;
    width: 260px;
    height: 71px;
    padding: 0 0 0 31px;
    border: 2px solid #e0e0e3;
    border-radius: 8px;
    background: #fff;
    color: #262628;
    font: inherit;
    letter-spacing: -0.850px;
}

.buttons .btn-forward {
    width: 278px;
    padding-left: 29px;
}

.buttons svg {
    width: 36px;
    height: 34px;
    margin-right: 17px;
}

.float-bar {
    position: absolute;
    left: 1148px;
    top: 109px;
    display: flex;
    align-items: center;
    width: 266px;
    height: 82px;
    padding-left: 25px;
    gap: 32px;
    border-radius: 12px;
    background: #fff;
    box-shadow: 0 4px 16px rgba(0, 0, 0, 0.22);
}

.float-bar svg {
    width: 30px;
    height: 30px;
}

.cursor {
    position: absolute;
    left: 1364px;
    top: 216px;
    width: 36px;
    height: 52px;
}
```
